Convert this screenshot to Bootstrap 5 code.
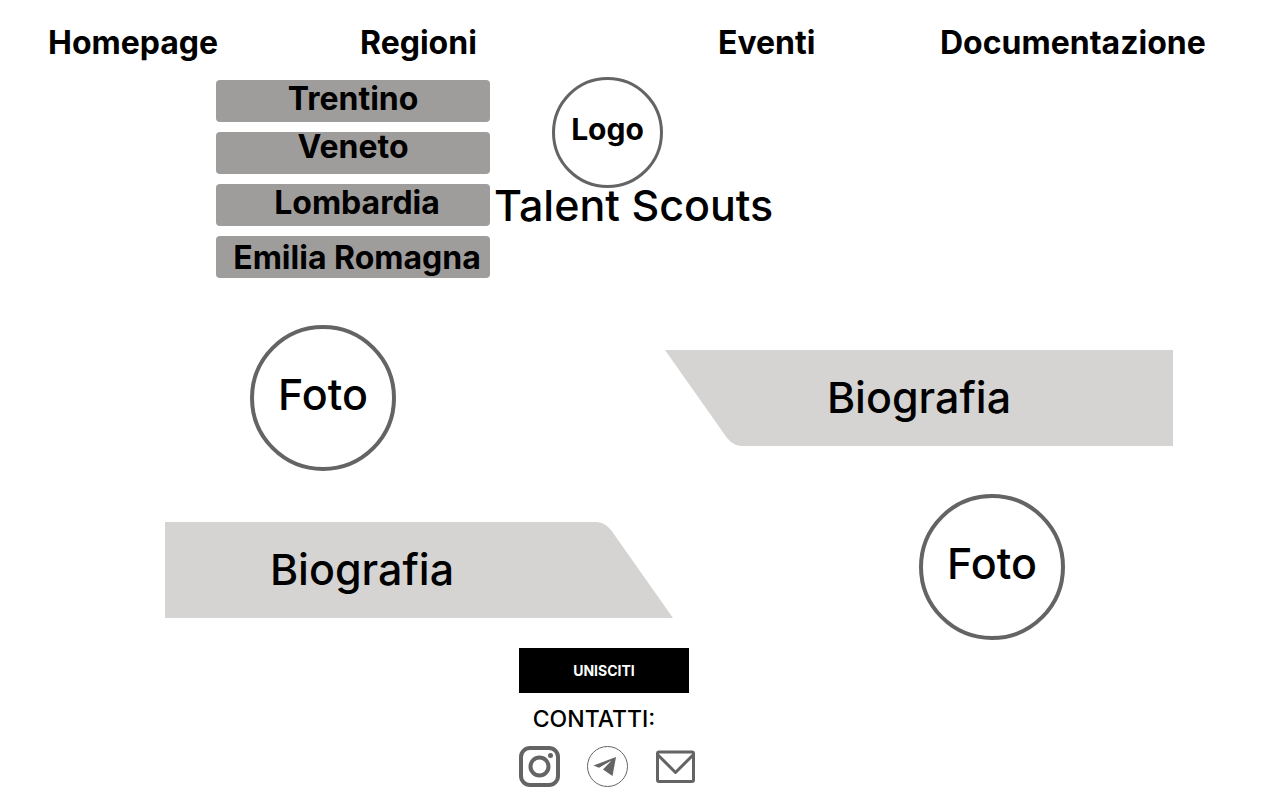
<!DOCTYPE html>
<html lang="it">
<head>
<meta charset="utf-8">
<meta name="viewport" content="width=device-width, initial-scale=1">
<title>Talent Scouts</title>
<link href="https://cdn.jsdelivr.net/npm/bootstrap@5.3.0/dist/css/bootstrap.min.css" rel="stylesheet">
<style>
  body { font-family: Inter, "Open Sans", sans-serif; color: #000; background: #fff; }
  a { color: inherit; text-decoration: none; }
  .site-nav, .intro, .profile-a, .profile-b, .site-footer { display: grid; }
  .label-bold { font-size: 32px; line-height: 40px; font-weight: 700; white-space: nowrap; }
  .label-big { font-size: 43px; line-height: 48px; font-weight: 500; white-space: nowrap; }

  .site-nav { grid-template-columns: 48fr 312fr 358fr 222fr 340fr; padding-top: 23px; }
  .site-nav a:first-child { grid-column: 2; }

  .intro { grid-template-columns: 216fr 274fr 790fr; padding-top: 14px; }
  .region-list { grid-column: 2; gap: 10px; padding-top: 3px; }
  .region { height: 42px; padding: 0 2px 5px; background: #9f9d9b; border-radius: 4px; }
  .region span { line-height: 30px; }
  .brand-ring { width: 111px; height: 111px; border: 3px solid #646464; margin-left: 62px; padding-bottom: 8px; font-size: 30px; }
  .brand-title { line-height: 34px; margin: 0; }

  .photo-ring { width: 146px; height: 146px; border: 4px solid #646464; padding-bottom: 8px; }
  .bio { height: 96px; padding-bottom: 2px; background: #d5d4d2; }
  .profile-a { grid-template-columns: 250fr 415fr 508fr 107fr; margin-top: 47px; }
  .profile-a .photo-ring { grid-column: 2; }
  .profile-a .bio { clip-path: polygon(0 0, 100% 0, 100% 100%, 76px 100%, 71px 95px, 66px 92px, 62px 88px); }
  .profile-b { grid-template-columns: 165fr 508fr 246fr 361fr; margin-top: 23px; }
  .profile-b .bio { grid-column: 2; margin-top: 6px; padding-right: 114px; clip-path: polygon(0 0, calc(100% - 76px) 0, calc(100% - 71px) 1px, calc(100% - 66px) 4px, calc(100% - 62px) 8px, 100% 100%, 0 100%); }
  .profile-b .photo-ring { grid-column: 4; }

  .site-footer { grid-template-columns: 519fr 761fr; margin-top: 8px; }
  .contact-block { grid-column: 2; width: 176px; }
  .join-btn { width: 170px; height: 45px; background: #000; color: #fff; font-size: 14px; font-weight: 700; }
  .contact-title { width: 150px; font-size: 23px; line-height: 36px; margin: 8px 0 9px; }
  .contact-links { gap: 27px; }
</style>
</head>
<body>
<nav class="site-nav label-bold" aria-label="Principale">
  <a href="#">Homepage</a>
  <a href="#regioni">Regioni</a>
  <a href="#">Eventi</a>
  <a href="#">Documentazione</a>
</nav>

<main>
  <section class="intro">
    <div class="region-list d-flex flex-column" id="regioni">
      <a class="region label-bold d-flex justify-content-center align-items-center" href="#"><span>Trentino</span></a>
      <a class="region label-bold d-flex justify-content-center align-items-start" href="#"><span>Veneto</span></a>
      <a class="region label-bold d-flex justify-content-center align-items-center" href="#"><span class="ps-2">Lombardia</span></a>
      <a class="region label-bold d-flex justify-content-center align-items-end" href="#"><span class="ps-2">Emilia Romagna</span></a>
    </div>
    <div>
      <div class="brand-ring label-bold rounded-circle d-flex justify-content-center align-items-center">Logo</div>
      <h1 class="brand-title label-big ps-1">Talent Scouts</h1>
    </div>
  </section>

  <section class="profile-a align-items-center">
    <div class="photo-ring label-big rounded-circle d-flex justify-content-center align-items-center">Foto</div>
    <div class="bio label-big d-flex justify-content-center align-items-center">Biografia</div>
  </section>

  <section class="profile-b align-items-center">
    <div class="bio label-big d-flex justify-content-center align-items-center">Biografia</div>
    <div class="photo-ring label-big rounded-circle d-flex justify-content-center align-items-center">Foto</div>
  </section>
</main>

<footer class="site-footer">
  <div class="contact-block">
    <button type="button" class="join-btn btn rounded-0 border-0 p-0 d-block">UNISCITI</button>
    <h2 class="contact-title text-center">CONTATTI:</h2>
    <div class="contact-links d-flex align-items-center">
      <a class="d-flex" href="#" aria-label="Instagram">
        <svg width="41" height="41" viewBox="0 0 41 41" fill="none" stroke="#646464">
          <rect x="2" y="2" width="37" height="37" rx="9" stroke-width="4"/>
          <circle cx="20.500" cy="20.500" r="9" stroke-width="4"/>
          <circle cx="31.500" cy="9.500" r="2.500" fill="#646464" stroke="none"/>
        </svg>
      </a>
      <a class="d-flex" href="#" aria-label="Telegram">
        <svg width="41" height="41" viewBox="0 0 41 41">
          <circle cx="20.500" cy="20.500" r="20" fill="none" stroke="#646464"/>
          <path fill="#646464" d="M6.500 19.500 29 11 25.500 30 16 23.500 24.500 14.500 12 21.800Z"/>
        </svg>
      </a>
      <a class="d-flex" href="#" aria-label="Email">
        <svg width="40" height="33" viewBox="0 0 40 33" fill="none" stroke="#646464" stroke-width="3" stroke-linejoin="round">
          <rect x="2.500" y="2" width="36" height="29.500" rx="1.500"/>
          <path d="M3 5 20.500 22.500 38 5"/>
        </svg>
      </a>
    </div>
  </div>
</footer>
<script src="https://cdn.jsdelivr.net/npm/bootstrap@5.3.0/dist/js/bootstrap.bundle.min.js"></script>
</body>
</html>
